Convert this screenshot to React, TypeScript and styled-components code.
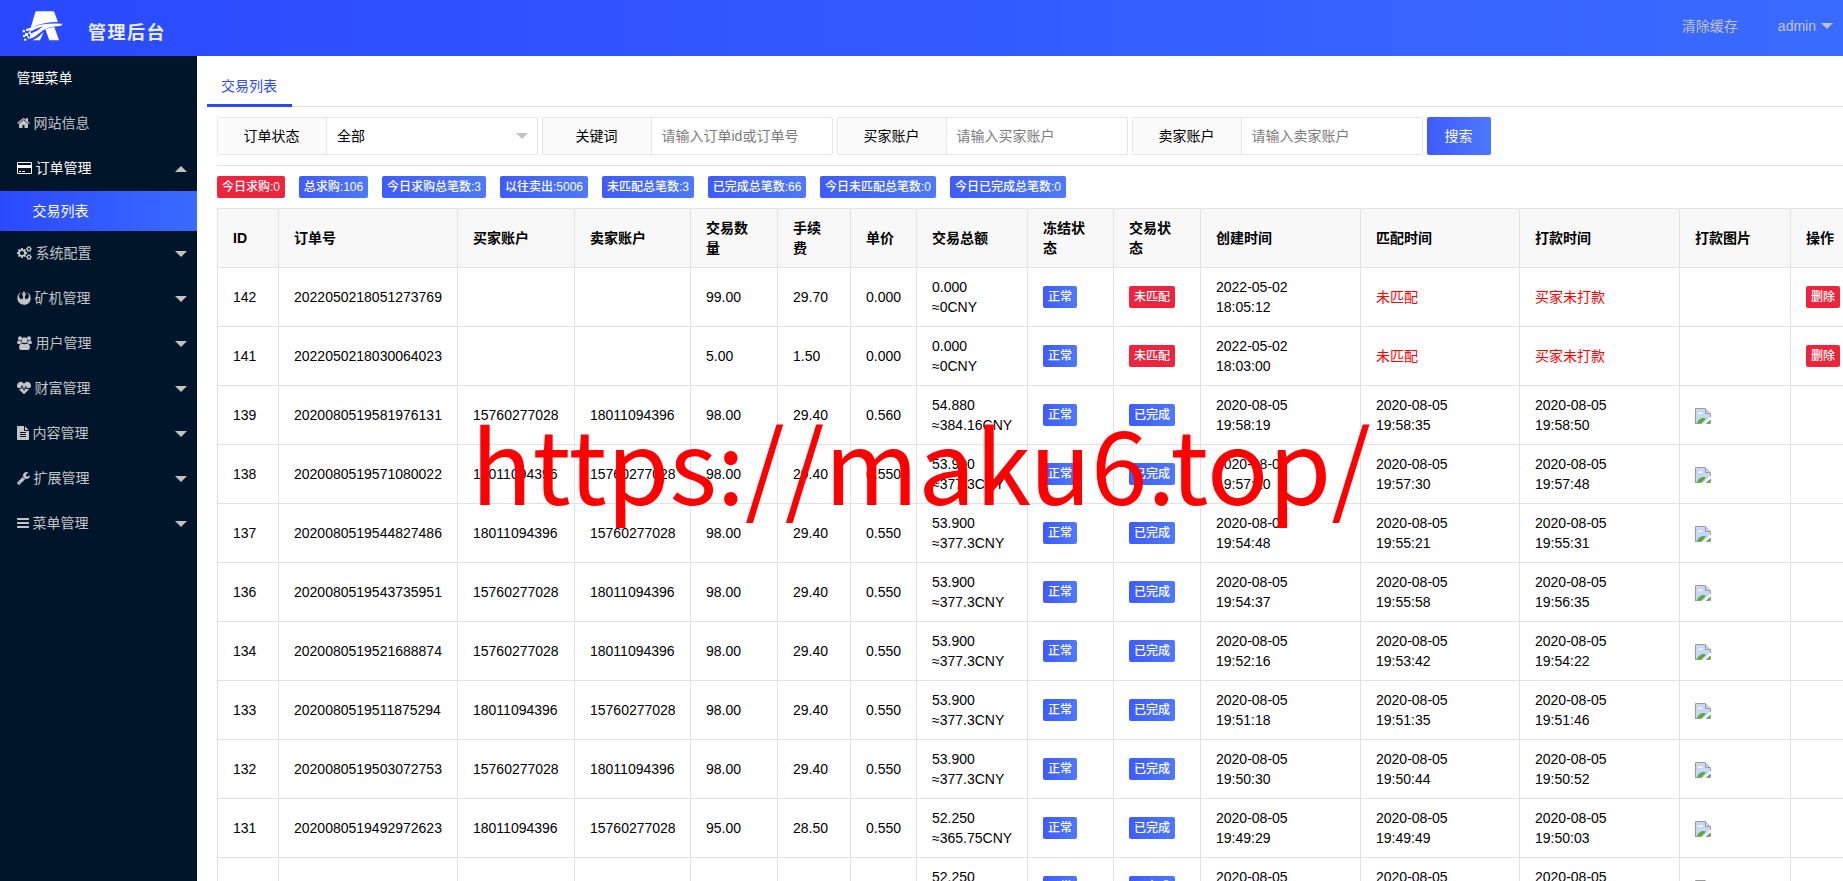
import React from "react";
import styled, { createGlobalStyle, css } from "styled-components";
import { FaHeartbeat, FaRebel } from "react-icons/fa";

const blueGradient = "linear-gradient(to right, #3f5bff, #4d79fc)";

const GlobalStyle = createGlobalStyle`
  * { box-sizing: border-box; }
  html, body { margin: 0; height: 100%; overflow: hidden; }
  body {
    background: #fff;
    color: #000;
    font: 14px/20px "Liberation Sans", "Noto Sans CJK SC", sans-serif;
  }
  #root { height: 100%; }
`;

const Page = styled.div`
  position: relative;
  width: 100%;
  height: 881px;
  display: flex;
  flex-direction: column;
  overflow: hidden;
`;

const Header = styled.header`
  flex: none;
  height: 56px;
  display: flex;
  align-items: center;
  justify-content: space-between;
  background: linear-gradient(to right, #2a49ff, #3a6bff);
`;

const Brand = styled.div`
  display: flex;
  align-items: center;
  height: 56px;
  padding-left: 20px;
`;

const BrandName = styled.span`
  margin: 10px 0 0 25px;
  font-size: 18px;
  line-height: 24px;
  font-weight: 700;
  letter-spacing: 1.5px;
  color: #e9edff;
`;

const HeaderLinks = styled.nav`
  display: flex;
  align-items: center;
  padding: 0 10px 4px 0;
  gap: 40px;
  color: #c3c4cc;
`;

const UserLink = styled.span`
  display: flex;
  align-items: center;
  gap: 5px;
`;

const Caret = styled.i<{ $up?: boolean; $tone?: string }>`
  width: 0;
  height: 0;
  border: 6px solid transparent;
  ${(p) =>
    p.$up
      ? css`border-bottom-color: ${p.$tone ?? "#c2c2c2"}; border-top-width: 0;`
      : css`border-top-color: ${p.$tone ?? "#c2c2c2"}; border-bottom-width: 0;`}
`;

const Body = styled.div`
  flex: 1;
  min-height: 0;
  display: flex;
`;

const Sidebar = styled.aside`
  flex: none;
  width: 197px;
  background: #001529;
`;

const MenuRow = styled.div<{ $bright?: boolean }>`
  height: 45px;
  padding: 0 10px 2px 16.500px;
  display: flex;
  align-items: center;
  color: ${(p) => (p.$bright ? "#fff" : "#c2c4c8")};

  svg { flex: none; margin-right: 4px; }
  i { margin: 2px 0 0 auto; }
`;

const SubMenuRow = styled.div`
  height: 40px;
  padding-left: 32.500px;
  line-height: 40px;
  color: #fff;
  background: linear-gradient(to right, #2a49ff, #3a6bff);
`;

const Main = styled.main`
  flex: 1;
  min-width: 0;
  padding-left: 10px;
  overflow: hidden;
`;

const TabBar = styled.div`
  height: 51px;
  padding-top: 10px;
  display: flex;
  border-bottom: 1px solid #e2e2e2;
`;

const Tab = styled.div`
  width: 85px;
  height: 41px;
  padding-right: 1px;
  text-align: center;
  line-height: 40px;
  color: #2a49ff;
  border-bottom: 3px solid #2a49ff;
`;

const Content = styled.div`
  padding-left: 10px;
`;

const Filters = styled.div`
  display: flex;
  gap: 4px;
  padding: 10px 0;
  border-bottom: 1px solid #e2e2e2;
`;

const FieldGroup = styled.div<{ $width: number }>`
  width: ${(p) => p.$width}px;
  height: 38px;
  display: flex;
  border: 1px solid #e6e6e6;
  border-radius: 2px;
`;

const FieldLabel = styled.label`
  width: 109px;
  padding-right: 1px;
  text-align: center;
  line-height: 36px;
  background: #fbfbfb;
  border-right: 1px solid #e6e6e6;
`;

const SelectBox = styled.div`
  flex: 1;
  display: flex;
  align-items: center;
  justify-content: space-between;
  padding: 0 9px 0 10px;
`;

const TextInput = styled.input`
  flex: 1;
  min-width: 0;
  padding: 0 0 0 9.500px;
  border: 0;
  outline: 0;
  background: none;
  font: inherit;
  &::placeholder { color: #7c7c7c; opacity: 1; }
`;

const SearchButton = styled.button`
  width: 64px;
  height: 38px;
  padding: 0 1px 0 0;
  border: 0;
  border-radius: 2px;
  font: inherit;
  color: #fff;
  background: ${blueGradient};
`;

const Stats = styled.div`
  display: flex;
  gap: 14px;
  padding: 10px 0;
`;

const Tag = styled.span<{ $red?: boolean; $width?: number }>`
  display: inline-block;
  vertical-align: middle;
  width: ${(p) => (p.$width ? `${p.$width}px` : "auto")};
  height: 22px;
  padding: 0 5px;
  text-align: center;
  white-space: nowrap;
  font-size: 12px;
  line-height: 22px;
  font-weight: 500;
  color: #fff;
  border-radius: 2px;
  background: ${(p) => (p.$red ? "#ee243c" : blueGradient)};
`;

const StatTag = styled(Tag)`
  padding: 0;
`;

const Table = styled.table`
  width: 1700px;
  table-layout: fixed;
  border-collapse: collapse;

  th, td {
    height: 59px;
    padding: 9px 15px;
    border: 1px solid #e2e2e2;
    text-align: left;
    font-size: 14px;
    line-height: 20px;
  }
  th { padding-right: 17px; background: #f8f8f8; font-weight: 700; }
`;

const Warn = styled.span`
  color: #ff0000;
`;

const Watermark = styled.div`
  position: absolute;
  left: 471px;
  top: 389px;
  font: 400 101.300px/144px "Noto Sans CJK SC", sans-serif;
  color: #ff0000;
  white-space: nowrap;
  pointer-events: none;
`;

const glyphs = {
  home: "M1472 992v480q0 26-19 45t-45 19h-384v-384h-256v384h-384q-26 0-45-19t-19-45v-480q0-1 .5-3t.5-3l575-474 575 474q1 2 1 6zm223-69l-62 74q-8 9-21 11h-3q-13 0-21-7l-692-577-692 577q-12 8-24 7-13-2-21-11l-62-74q-8-10-7-23.5t11-21.5l719-599q32-26 76-26t76 26l244 204v-195q0-14 9-23t23-9h192q14 0 23 9t9 23v408l219 182q10 8 11 21.5t-7 23.5z",
  card: "M1760 128q66 0 113 47t47 113v1216q0 66-47 113t-113 47h-1600q-66 0-113-47t-47-113v-1216q0-66 47-113t113-47h1600zm-1600 128q-13 0-22.500 9.500t-9.500 22.500v224h1664v-224q0-13-9.500-22.500t-22.500-9.500h-1600zm1600 1280q13 0 22.500-9.500t9.500-22.500v-608h-1664v608q0 13 9.500 22.500t22.500 9.500h1600zm-1504-128v-128h256v128h-256zm384 0v-128h384v128h-384z",
  cogs: "M896 896q0-106-75-181t-181-75-181 75-75 181 75 181 181 75 181-75 75-181zm768 512q0-52-38-90t-90-38-90 38-38 90q0 53 37.5 90.500t90.500 37.500 90.500-37.500 37.500-90.500zm0-1024q0-52-38-90t-90-38-90 38-38 90q0 53 37.500 90.500t90.500 37.500 90.500-37.500 37.500-90.500zm-384 421v185q0 10-7 19.500t-16 10.500l-155 24q-11 35-32 76 34 48 90 115 7 11 7 20 0 12-7 19-23 30-82.500 89.500t-78.500 59.500q-11 0-21-7l-115-90q-37 19-77 31-11 108-23 155-7 24-30 24h-186q-11 0-20-7.500t-10-17.500l-23-153q-34-10-75-31l-118 89q-7 7-20 7-11 0-21-8-144-133-144-160 0-9 7-19 10-14 41-53t47-61q-23-44-35-82l-152-24q-10-1-17-9.500t-7-19.500v-185q0-10 7-19.500t16-10.500l155-24q11-35 32-76-34-48-90-115-7-11-7-20 0-12 7-20 22-30 82-89t79-59q11 0 21 7l115 90q34-18 77-32 11-108 23-154 7-24 30-24h186q11 0 20 7.500t10 17.500l23 153q34 10 75 31l118-89q8-7 20-7 11 0 21 8 144 133 144 160 0 8-7 19-12 16-42 54t-45 60q23 48 34 82l152 23q10 2 17 10.500t7 19.500zm640 533v140q0 16-149 31-12 27-30 52 51 113 51 138 0 4-4 7-122 71-124 71-8 0-46-47t-52-68q-20 2-30 2t-30-2q-14 21-52 68t-46 47q-2 0-124-71-4-3-4-7 0-25 51-138-18-25-30-52-149-15-149-31v-140q0-16 149-31 13-29 30-52-51-113-51-138 0-4 4-7 4-2 35-20t59-34 30-16q8 0 46 46.500t52 67.500q20-2 30-2t30 2q51-71 92-112l6-2q4 0 124 70 4 3 4 7 0 25-51 138 17 23 30 52 149 15 149 31zm0-1024v140q0 16-149 31-12 27-30 52 51 113 51 138 0 4-4 7-122 71-124 71-8 0-46-47t-52-68q-20 2-30 2t-30-2q-14 21-52 68t-46 47q-2 0-124-71-4-3-4-7 0-25 51-138-18-25-30-52-149-15-149-31v-140q0-16 149-31 13-29 30-52-51-113-51-138 0-4 4-7 4-2 35-20t59-34 30-16q8 0 46 46.500t52 67.500q20-2 30-2t30 2q51-71 92-112l6-2q4 0 124 70 4 3 4 7 0 25-51 138 17 23 30 52 149 15 149 31z",
  file: "M1596 476q14 14 28 36h-472v-472q22 14 36 28zm-476 164h544v1056q0 40-28 68t-68 28h-1344q-40 0-68-28t-28-68v-1600q0-40 28-68t68-28h800v544q0 40 28 68t68 28zm160 736v-64q0-14-9-23t-23-9h-704q-14 0-23 9t-9 23v64q0 14 9 23t23 9h704q14 0 23-9t9-23zm0-256v-64q0-14-9-23t-23-9h-704q-14 0-23 9t-9 23v64q0 14 9 23t23 9h704q14 0 23-9t9-23zm0-256v-64q0-14-9-23t-23-9h-704q-14 0-23 9t-9 23v64q0 14 9 23t23 9h704q14 0 23-9t9-23z",
  wrench: "M448 1472q0-26-19-45t-45-19-45 19-19 45 19 45 45 19 45-19 19-45zm644-420l-682 682q-37 37-90 37-52 0-91-37l-106-108q-38-36-38-90 0-53 38-91l681-681q39 98 114.500 173.500t173.500 114.500zm634-435q0 39-23 106-47 134-164.500 217.500t-258.500 83.500q-185 0-316.500-131.500t-131.500-316.500 131.500-316.500 316.500-131.500q58 0 121.500 16.500t107.500 46.500q16 11 16 28t-16 28l-293 169v224l193 107q5-3 79-48.500t135.500-81 70.500-35.500q15 0 23.500 10t8.500 25z",
  bars: "M1664 1344v128q0 26-19 45t-45 19h-1408q-26 0-45-19t-19-45v-128q0-26 19-45t45-19h1408q26 0 45 19t19 45zm0-512v128q0 26-19 45t-45 19h-1408q-26 0-45-19t-19-45v-128q0-26 19-45t45-19h1408q26 0 45 19t19 45zm0-512v128q0 26-19 45t-45 19h-1408q-26 0-45-19t-19-45v-128q0-26 19-45t45-19h1408q26 0 45 19t19 45z",
};

function Glyph({ name, width, box }: { name: keyof typeof glyphs; width: number; box: string }) {
  return (
    <svg width={width} height={14} viewBox={box} fill="currentColor" fillRule="evenodd">
      <path d={glyphs[name]} />
    </svg>
  );
}

function GroupIcon() {
  return (
    <svg width={15} height={14} viewBox="0 0 15 14" fill="currentColor">
      <circle cx="3" cy="2.200" r="2" />
      <circle cx="12" cy="2.200" r="2" />
      <circle cx="7.500" cy="4.200" r="2.900" />
      <path d="M.2 7.200C.2 5.200.7 4.300 1.500 4.300c.9.600 1.700.7 2.600.4.100 1 .5 1.900 1 2.500-1 0-1.800.4-2.400.9C1.200 8.200.2 8 .2 7.200z" />
      <path d="M14.800 7.200c0-2-.5-2.900-1.300-2.900-.9.600-1.700.7-2.600.4-.1 1-.5 1.900-1 2.500 1 0 1.800.4 2.400.9 1.500.1 2.500-.1 2.500-.9z" />
      <path d="M4.700 7.500c1.800 1.100 3.800 1.100 5.600 0 1.800 0 2.600 1.800 2.600 4.300 0 1.300-.8 2.100-2 2.100H4.100c-1.200 0-2-.8-2-2.100 0-2.500.8-4.300 2.600-4.300z" />
    </svg>
  );
}

function Logo() {
  return (
    <svg width="43" height="34" viewBox="30 27 129 102" fill="#fff">
      <path d="M81 28h48q3 0 4 3l11 29q-46 0-82 17L76 31q1-3 5-3z" />
      <path d="M53 80Q92 62 157 65Q158 69 150 72Q112 72 90 92Q76 105 56 112Q63 104 60 96Q80 90 100 73Q80 78 62 88z" />
      <path d="M106 82Q120 76 133 75L147 115H118z" />
      <path d="M101 90L90 115H68Q88 106 101 90z" />
      <path d="M38 84h7v7h-7zM48 80h8v7h-8zM45 93h9v9h-9zM39 99h6v6h-6zM56 88h6v8h-6zM52 103h6v6h-6zM42 110h7v6h-7z" />
    </svg>
  );
}

const BrokenIcon = styled.svg`
  display: block;
  margin-top: 1px;
`;

function BrokenImage() {
  return (
    <BrokenIcon width="16" height="16" viewBox="0 0 16 16">
      <path d="M1 1h9l5 5v3L9 15H1z" fill="#c5d9f7" />
      <path d="M3 6a1.500 1.500 0 0 1 2-1.500 2 2 0 0 1 3 1.500z" fill="#fff" />
      <path d="M2 15c1-3 4-5.500 7-5l2 .5L7 15z" fill="#5aac3a" />
      <path d="M11.500 15l3.500-3v3z" fill="#5aac3a" />
      <path d="M.5 16V.5H10L15.500 6v3M10.500.5V5.500h5M.5 15.500H7M11 15.500h4.500V12" fill="none" stroke="#9a9a9a" />
    </BrokenIcon>
  );
}

const menu = [
  { label: "系统配置", icon: <Glyph name="cogs" width={15} box="0 0 1920 1792" /> },
  { label: "矿机管理", icon: <FaRebel size={14} /> },
  { label: "用户管理", icon: <GroupIcon /> },
  { label: "财富管理", icon: <FaHeartbeat size={14} /> },
  { label: "内容管理", icon: <Glyph name="file" width={12} box="128 0 1536 1792" /> },
  { label: "扩展管理", icon: <Glyph name="wrench" width={13} box="64 0 1664 1792" /> },
  { label: "菜单管理", icon: <Glyph name="bars" width={12} box="128 0 1536 1792" /> },
];

const stats: [string, number][] = [
  ["今日求购:0", 68],
  ["总求购:106", 69],
  ["今日求购总笔数:3", 104],
  ["以往卖出:5006", 88],
  ["未匹配总笔数:3", 92],
  ["已完成总笔数:66", 98],
  ["今日未匹配总笔数:0", 116],
  ["今日已完成总笔数:0", 116],
];

const columns: [string, number][] = [
  ["ID", 61],
  ["订单号", 179],
  ["买家账户", 117],
  ["卖家账户", 116],
  ["交易数量", 87],
  ["手续费", 73],
  ["单价", 66],
  ["交易总额", 111],
  ["冻结状态", 86],
  ["交易状态", 87],
  ["创建时间", 160],
  ["匹配时间", 159],
  ["打款时间", 160],
  ["打款图片", 111],
  ["操作", 127],
];

const A = "15760277028";
const B = "18011094396";

interface Order {
  id: string;
  no: string;
  buyer?: string;
  seller?: string;
  amount: string;
  fee: string;
  price: string;
  total: string;
  cny: string;
  day: string;
  created: string;
  matched?: string;
  paid?: string;
}

const done = (
  id: string, no: string, buyer: string, amount: string, fee: string, price: string,
  total: string, cny: string, created: string, matched: string, paid: string,
): Order => ({
  id, no, buyer, seller: buyer === A ? B : A, amount, fee, price, total, cny,
  day: "2020-08-05", created, matched, paid,
});

const orders: Order[] = [
  { id: "142", no: "2022050218051273769", amount: "99.00", fee: "29.70", price: "0.000", total: "0.000", cny: "0", day: "2022-05-02", created: "18:05:12" },
  { id: "141", no: "2022050218030064023", amount: "5.00", fee: "1.50", price: "0.000", total: "0.000", cny: "0", day: "2022-05-02", created: "18:03:00" },
  done("139", "2020080519581976131", A, "98.00", "29.40", "0.560", "54.880", "384.16", "19:58:19", "19:58:35", "19:58:50"),
  done("138", "2020080519571080022", B, "98.00", "29.40", "0.550", "53.900", "377.3", "19:57:10", "19:57:30", "19:57:48"),
  done("137", "2020080519544827486", B, "98.00", "29.40", "0.550", "53.900", "377.3", "19:54:48", "19:55:21", "19:55:31"),
  done("136", "2020080519543735951", A, "98.00", "29.40", "0.550", "53.900", "377.3", "19:54:37", "19:55:58", "19:56:35"),
  done("134", "2020080519521688874", A, "98.00", "29.40", "0.550", "53.900", "377.3", "19:52:16", "19:53:42", "19:54:22"),
  done("133", "2020080519511875294", B, "98.00", "29.40", "0.550", "53.900", "377.3", "19:51:18", "19:51:35", "19:51:46"),
  done("132", "2020080519503072753", A, "98.00", "29.40", "0.550", "53.900", "377.3", "19:50:30", "19:50:44", "19:50:52"),
  done("131", "2020080519492972623", B, "95.00", "28.50", "0.550", "52.250", "365.75", "19:49:29", "19:49:49", "19:50:03"),
];

const lastOrder = { total: "52.250", day: "2020-08-05" };

function OrderRow({ order }: { order: Order }) {
  const open = !order.matched;
  return (
    <tr>
      <td>{order.id}</td>
      <td>{order.no}</td>
      <td>{order.buyer}</td>
      <td>{order.seller}</td>
      <td>{order.amount}</td>
      <td>{order.fee}</td>
      <td>{order.price}</td>
      <td>{order.total}<br />≈{order.cny}CNY</td>
      <td><Tag>正常</Tag></td>
      <td><Tag $red={open}>{open ? "未匹配" : "已完成"}</Tag></td>
      <td>{order.day}<br />{order.created}</td>
      <td>{open ? <Warn>未匹配</Warn> : <>{order.day}<br />{order.matched}</>}</td>
      <td>{open ? <Warn>买家未打款</Warn> : <>{order.day}<br />{order.paid}</>}</td>
      <td>{open ? null : <BrokenImage />}</td>
      <td>{open ? <Tag $red>删除</Tag> : null}</td>
    </tr>
  );
}

function PartialRow() {
  return (
    <tr>
      <td /><td /><td /><td /><td /><td /><td />
      <td>{lastOrder.total}<br />&nbsp;</td>
      <td><Tag>正常</Tag></td>
      <td><Tag>已完成</Tag></td>
      <td>{lastOrder.day}<br />&nbsp;</td>
      <td>{lastOrder.day}<br />&nbsp;</td>
      <td>{lastOrder.day}<br />&nbsp;</td>
      <td><BrokenImage /></td>
      <td />
    </tr>
  );
}

export default function App() {
  return (
    <Page>
      <GlobalStyle />
      <Header>
        <Brand>
          <Logo />
          <BrandName>管理后台</BrandName>
        </Brand>
        <HeaderLinks>
          <span>清除缓存</span>
          <UserLink>admin <Caret /></UserLink>
        </HeaderLinks>
      </Header>
      <Body>
        <Sidebar>
          <MenuRow $bright>管理菜单</MenuRow>
          <MenuRow><Glyph name="home" width={13} box="64 0 1664 1792" />网站信息</MenuRow>
          <MenuRow $bright><Glyph name="card" width={15} box="0 0 1920 1792" />订单管理<Caret $up /></MenuRow>
          <SubMenuRow>交易列表</SubMenuRow>
          {menu.map((m) => (
            <MenuRow key={m.label}>{m.icon}{m.label}<Caret /></MenuRow>
          ))}
        </Sidebar>
        <Main>
          <TabBar><Tab>交易列表</Tab></TabBar>
          <Content>
            <Filters>
              <FieldGroup $width={321}>
                <FieldLabel>订单状态</FieldLabel>
                <SelectBox>全部<Caret /></SelectBox>
              </FieldGroup>
              <FieldGroup $width={291}>
                <FieldLabel>关键词</FieldLabel>
                <TextInput placeholder="请输入订单id或订单号" />
              </FieldGroup>
              <FieldGroup $width={291}>
                <FieldLabel>买家账户</FieldLabel>
                <TextInput placeholder="请输入买家账户" />
              </FieldGroup>
              <FieldGroup $width={291}>
                <FieldLabel>卖家账户</FieldLabel>
                <TextInput placeholder="请输入卖家账户" />
              </FieldGroup>
              <SearchButton>搜索</SearchButton>
            </Filters>
            <Stats>
              {stats.map(([text, width], i) => (
                <StatTag key={text} $red={i === 0} $width={width}>{text}</StatTag>
              ))}
            </Stats>
            <Table>
              <colgroup>
                {columns.map(([name, width]) => <col key={name} width={width} />)}
              </colgroup>
              <thead>
                <tr>{columns.map(([name]) => <th key={name}>{name}</th>)}</tr>
              </thead>
              <tbody>
                {orders.map((o) => <OrderRow key={o.id} order={o} />)}
                <PartialRow />
              </tbody>
            </Table>
          </Content>
        </Main>
      </Body>
      <Watermark>https://maku6.top/</Watermark>
    </Page>
  );
}
